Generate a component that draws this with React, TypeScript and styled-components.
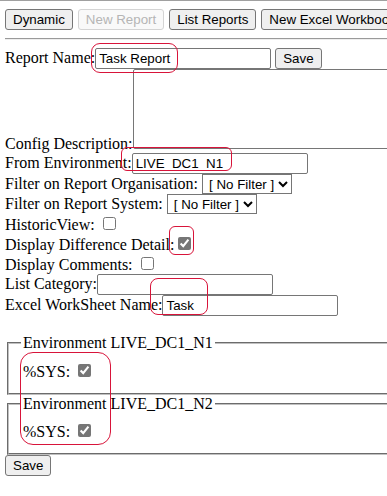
import styled, { createGlobalStyle } from 'styled-components';

const GlobalStyle = createGlobalStyle`
  html, body {
    margin: 0;
    padding: 0;
    overflow: hidden;
    background: #fff;
  }
`;

const Page = styled.div`
  position: relative;
  width: 387px;
  height: 496px;
  overflow: hidden;
  border-top: 1px solid #a0a0a0;
  box-sizing: border-box;
  font-family: 'Liberation Serif', 'Times New Roman', serif;
  font-size: 16px;
  color: #000;
`;

const Content = styled.div`
  width: 440px;
  padding: 8px 0 0 5px;
`;

const Toolbar = styled.div`
  display: flex;
  flex-wrap: nowrap;
  gap: 5px;
`;

const Button = styled.button`
  flex: none;
  height: 21px;
  padding: 1px 7px;
  border: 1px solid #767676;
  border-radius: 3px;
  background: #efefef;
  color: #000;
  font-family: 'Liberation Sans', Arial, sans-serif;
  font-size: 13.333px;
  line-height: normal;
  white-space: nowrap;
  box-sizing: border-box;
  vertical-align: baseline;

  &:disabled {
    background: #f9f9f9;
    border-color: #d4d4d4;
    color: #b5b5b5;
  }
`;

const Rule = styled.hr`
  margin: 8px 0;
  border: none;
  border-top: 1px solid #9a9a9a;
  border-bottom: 1px solid #eeeeee;
  height: 0;
`;

const Row = styled.div`
  white-space: nowrap;
`;

const TextInput = styled.input`
  width: 176px;
  height: 21px;
  padding: 1px 3px;
  border: 1px solid #767676;
  border-radius: 2px;
  box-sizing: border-box;
  font-family: 'Liberation Sans', Arial, sans-serif;
  font-size: 13.333px;
  color: #000;
  margin: 0;
`;

const SaveButton = styled(Button)`
  margin-left: 4px;
`;

const DescArea = styled.textarea`
  width: 400px;
  height: 80px;
  margin: 0;
  padding: 2px;
  border: 1px solid #767676;
  border-radius: 2px;
  box-sizing: border-box;
  resize: none;
  font-family: 'Liberation Mono', monospace;
  font-size: 13.333px;
  vertical-align: baseline;
`;

const Select = styled.select`
  height: 20px;
  margin: 0;
  padding: 0 0 0 2px;
  border: 1px solid #767676;
  border-radius: 0;
  background: #fff;
  font-family: 'Liberation Sans', Arial, sans-serif;
  font-size: 13.333px;
  color: #000;
`;

const Check = styled.input.attrs({ type: 'checkbox' })`
  width: 13px;
  height: 13px;
  margin: 3px 3px 3px 4px;
  accent-color: #767676;
`;

const Gap = styled.div`
  height: 18px;
`;

const Fieldset = styled.fieldset`
  margin: 0 2px;
  padding: 5.6px 12px 12px;
  border: 2px groove #c0c0c0;
  min-width: 0;
`;

const Legend = styled.legend`
  padding: 0 2px;
`;

const EnvRow = styled.div`
  white-space: nowrap;
  padding: 3px 0 0 2px;
`;

const Mark = styled.div<{ $x: number; $y: number; $w: number; $h: number; $r: number }>`
  position: absolute;
  left: ${(p) => p.$x}px;
  top: ${(p) => p.$y}px;
  width: ${(p) => p.$w}px;
  height: ${(p) => p.$h}px;
  border: 1px solid #d8143a;
  border-radius: ${(p) => p.$r}px;
  box-sizing: border-box;
  pointer-events: none;
`;

const environments = ['LIVE_DC1_N1', 'LIVE_DC1_N2'];

const marks = [
  { x: 91, y: 42, w: 87, h: 30, r: 9 },
  { x: 121, y: 146, w: 111, h: 24, r: 6 },
  { x: 169, y: 225, w: 25, h: 29, r: 6 },
  { x: 150, y: 277, w: 58, h: 37, r: 8 },
  { x: 20, y: 351, w: 91, h: 93, r: 13 },
];

export default function App() {
  return (
    <Page>
      <GlobalStyle />
      <Content>
        <Toolbar>
          <Button>Dynamic</Button>
          <Button disabled>New Report</Button>
          <Button>List Reports</Button>
          <Button>New Excel Workbook</Button>
        </Toolbar>
        <Rule />
        <form onSubmit={(e) => e.preventDefault()}>
          <Row>
            Report Name:<TextInput defaultValue="Task Report" />
            <SaveButton type="submit">Save</SaveButton>
          </Row>
          <Row>
            Config Description:<DescArea />
          </Row>
          <Row>
            From Environment:<TextInput defaultValue="LIVE_DC1_N1" />
          </Row>
          <Row>
            Filter on Report Organisation:{' '}
            <Select defaultValue="">
              <option value="">[ No Filter ]</option>
            </Select>
          </Row>
          <Row>
            Filter on Report System:{' '}
            <Select defaultValue="">
              <option value="">[ No Filter ]</option>
            </Select>
          </Row>
          <Row>
            HistoricView: <Check />
          </Row>
          <Row>
            Display Difference Detail:<Check defaultChecked />
          </Row>
          <Row>
            Display Comments: <Check />
          </Row>
          <Row>
            List Category:<TextInput />
          </Row>
          <Row>
            Excel WorkSheet Name:<TextInput defaultValue="Task" />
          </Row>
          <Gap />
          {environments.map((env) => (
            <Fieldset key={env}>
              <Legend>Environment {env}</Legend>
              <EnvRow>
                %SYS: <Check defaultChecked />
              </EnvRow>
            </Fieldset>
          ))}
          <Button type="submit">Save</Button>
        </form>
      </Content>
      {marks.map((m, i) => (
        <Mark key={i} $x={m.x} $y={m.y} $w={m.w} $h={m.h} $r={m.r} />
      ))}
    </Page>
  );
}
